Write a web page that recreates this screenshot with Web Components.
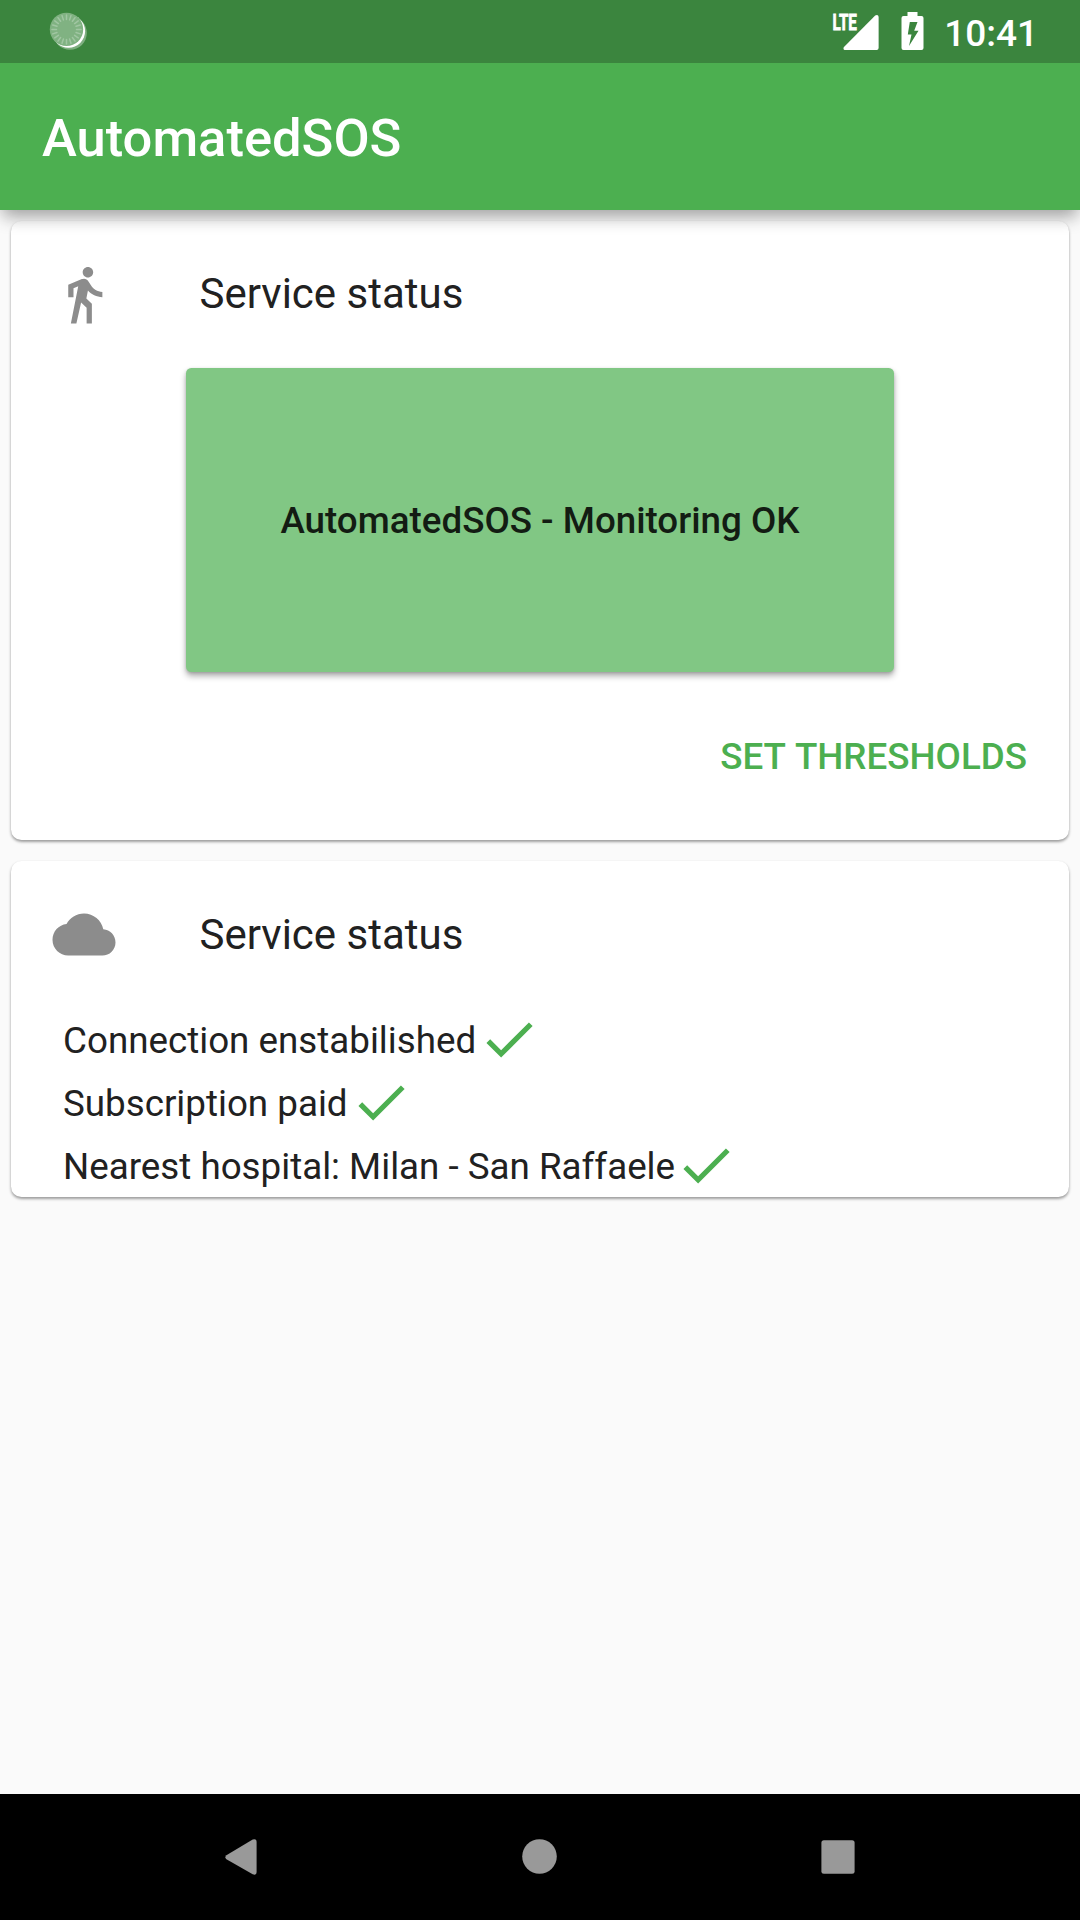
<!DOCTYPE html>
<html lang="en">
<head>
<meta charset="utf-8">
<title>AutomatedSOS</title>
<style>
html,body{margin:0;padding:0}
body{width:1080px;height:1920px;overflow:hidden;background:#fafafa;font-family:Roboto,"Noto Sans",sans-serif;color:#212121}
</style>
</head>
<body>
<sos-app></sos-app>
<script>
function define(name, html) {
  customElements.define(name, class extends HTMLElement {
    constructor() {
      super();
      this.attachShadow({ mode: 'open' }).innerHTML = html;
    }
  });
}

const ticks = Array.from({ length: 20 }, (_, i) =>
  `<path d="M29 13.5V18" transform="rotate(${i * 18} 29 28)"/>`).join('');

define('status-bar', `
<style>
:host{display:flex;box-sizing:border-box;height:63px;background:#3b853e;color:#fff;padding:0 42px 0 38px;justify-content:space-between;position:relative;z-index:1}
svg{display:block}
.right{display:flex}
.clock{font-size:37px;font-weight:500;padding:2px 0 0 20px;height:61px;line-height:63px;white-space:nowrap}
</style>
<svg width="60" height="63" viewBox="0 0 60 63">
  <circle cx="32" cy="33" r="16.8" fill="#fff" opacity=".35"/>
  <circle cx="30.500" cy="31.200" r="16.600" fill="#fff"/>
  <circle cx="28.500" cy="29.400" r="16.700" fill="#80b282"/>
  <g transform="translate(-.5 1.4)" stroke="#a0c6a2" stroke-width="1.5" stroke-linecap="round">${ticks}</g>
</svg>
<div class="right">
  <svg width="50" height="63" viewBox="829.4 0 50 63">
    <text x="832.8" y="29.8" font-family="Roboto,sans-serif" font-weight="700" font-size="22.5" fill="#fff" stroke="#fff" stroke-width=".8" textLength="24.500" lengthAdjust="spacingAndGlyphs">LTE</text>
    <path d="M845.5 50h31.5a2 2 0 0 0 2-2V17c0-2-1.800-2.800-3.400-1.400L844.600 46.700c-1.400 1.500-.600 3.300.900 3.300z" fill="#fff"/>
  </svg>
  <svg width="45" height="63" viewBox="879.5 0 45 63">
    <path fill="#fff" fill-rule="evenodd" d="M908 12h10v4h4a2 2 0 0 1 2 2v30a2 2 0 0 1-2 2h-18a2 2 0 0 1-2-2V18a2 2 0 0 1 2-2h4zM910.300 22L908.300 34.500H912L909.500 46L919 30.800H914.700L918 22z"/>
  </svg>
  <div class="clock">10:41</div>
</div>`);

define('app-bar', `
<style>
:host{display:flex;align-items:center;box-sizing:border-box;height:147px;padding:2px 42px 0;background:#4caf50;color:#fff;position:relative;
 font-size:52.5px;line-height:62px;font-weight:500;box-shadow:0 10px 16px -3px rgba(0,0,0,.3),0 3px 18px -2px rgba(0,0,0,.1)}
</style><slot></slot>`);

define('sos-card', `
<style>
:host{display:flex;flex-direction:column;box-sizing:border-box;background:#fff;border-radius:10.5px;box-shadow:0 2px 3px rgba(0,0,0,.34),0 1px 3px rgba(0,0,0,.08)}
</style><slot></slot>`);

define('list-tile', `
<style>
:host{display:flex;align-items:center;height:147px;padding:0 41px;gap:84.500px;flex:none}
::slotted(svg){width:63px;height:63px;fill:#8c8c8c;display:block;flex:none;overflow:visible}
span{font-size:42px;line-height:50px;margin-top:var(--label-shift,-2px);white-space:nowrap}
</style><slot name="icon"></slot><span><slot></slot></span>`);

define('raised-button', `
<style>
:host{display:flex;align-items:center;justify-content:center;box-sizing:border-box;width:708px;height:304px;align-self:center;padding:2px 0 0;
background:#81c784;border-radius:5.250px;color:#131c13;font-size:36.750px;line-height:44px;font-weight:500;white-space:nowrap;
box-shadow:0 4px 6px rgba(0,0,0,.32),0 1px 3px rgba(0,0,0,.14)}
</style><slot></slot>`);

define('flat-button', `
<style>
:host{display:flex;align-items:center;align-self:flex-end;height:94px;margin:38px 42px 0 0;color:#4caf50;font-size:36.750px;line-height:44px;font-weight:500;white-space:nowrap;word-spacing:1.500px}
</style><slot></slot>`);

define('check-row', `
<style>
:host{display:flex;align-items:center;height:63px;padding-left:52px;font-size:36.750px;line-height:44px;white-space:pre}
span{margin-top:2px}
svg{width:63px;height:63px;fill:#4caf50;flex:none;margin-left:var(--check-gap,1px)}
</style><span><slot></slot></span><svg viewBox="-.19 .1 24 24"><path d="M9 16.170L4.830 12l-1.420 1.410L9 19 21 7l-1.410-1.410z"/></svg>`);

define('nav-bar', `
<style>
:host{display:flex;height:126px;background:#000;flex:none;justify-content:center;align-items:center;gap:236px}
svg{width:63px;height:63px;fill:#999;display:block}
</style>
<svg viewBox="210 1826 63 63"><path d="M226.400 1855.300L252.700 1839.600Q256.600 1838.200 256.600 1842V1872Q256.600 1875.800 252.700 1874.200L226.400 1859.300Q224.400 1857.300 226.400 1855.300z"/></svg>
<svg viewBox="509 1826 63 63"><circle cx="539.500" cy="1856.500" r="17.300"/></svg>
<svg viewBox="808 1826 63 63"><rect x="821.400" y="1840.300" width="33.200" height="33.400" rx="2.500"/></svg>`);

define('sos-app', `
<style>
:host{display:flex;flex-direction:column;width:1080px;height:1920px;background:#fafafa}
main{flex:1;display:flex;flex-direction:column;gap:21px;padding:11px 11px 0}
.service{height:619px}
.cloud{height:336px;--label-shift:0px}
.hospital{--check-gap:-1px}
</style>
<status-bar></status-bar>
<app-bar>AutomatedSOS</app-bar>
<main>
  <sos-card class="service">
    <list-tile><svg slot="icon" viewBox="-.19 0 24 24"><path d="M13.500 5.500c1.100 0 2-.900 2-2s-.900-2-2-2-2 .900-2 2 .900 2 2 2zM9.800 8.900L7 23h2.100l1.800-8 2.100 2v6h2v-7.500l-2.100-2 .600-3C14.800 12 16.800 13 19 13v-2c-1.900 0-3.500-1-4.300-2.400l-1-1.600c-.400-.600-1-1-1.700-1-.300 0-.500.100-.800.100L6 8.300V13h2V9.600l1.800-.700"/></svg>Service status</list-tile>
    <raised-button>AutomatedSOS - Monitoring OK</raised-button>
    <flat-button>SET THRESHOLDS</flat-button>
  </sos-card>
  <sos-card class="cloud">
    <list-tile><svg slot="icon" viewBox="-.19 0 24 24"><path d="M19.350 10.040C18.670 6.590 15.640 4 12 4 9.110 4 6.600 5.640 5.350 8.040 2.340 8.360 0 10.910 0 14c0 3.310 2.690 6 6 6h13c2.760 0 5-2.240 5-5 0-2.640-2.050-4.780-4.650-4.960z"/></svg>Service status</list-tile>
    <check-row>Connection enstabilished</check-row>
    <check-row>Subscription paid</check-row>
    <check-row class="hospital">Nearest hospital: Milan - San Raffaele</check-row>
  </sos-card>
</main>
<nav-bar></nav-bar>`);
</script>
</body>
</html>
